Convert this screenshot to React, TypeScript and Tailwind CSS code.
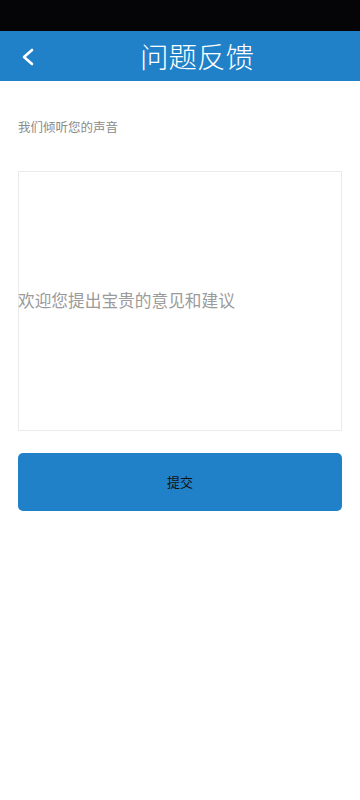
export default function App() {
  return (
    <div
      className="flex min-h-[800px] w-[360px] flex-col bg-white"
      style={{ fontFamily: '"Noto Sans CJK SC", "Noto Sans", sans-serif' }}
    >
      <div className="h-[31px] bg-[#050508]" />
      <header className="relative flex h-[50px] items-center justify-center bg-[#2181c8]">
        <svg
          className="absolute left-[20px] top-[17px]"
          width="16"
          height="18"
          viewBox="0 0 16 18"
          fill="none"
          stroke="white"
          strokeWidth="2.6"
          strokeLinecap="round"
          strokeLinejoin="round"
        >
          <path d="M12 2 L4 9 L12 16" />
        </svg>
        <h1 className="ml-[34px] text-[28.5px] font-light leading-none text-white">问题反馈</h1>
      </header>
      <div className="flex flex-col px-[18px]">
        <p className="mt-[37px] text-[12.5px] leading-[18px] text-[#8a8a8a]">我们倾听您的声音</p>
        <div className="mt-[35px] flex h-[260px] items-center border border-[#ebebeb]">
          <span className="-ml-px text-[16.7px] text-[#9b9b9b]">欢迎您提出宝贵的意见和建议</span>
        </div>
        <button className="mt-[22px] flex h-[58px] items-center justify-center rounded-[5px] bg-[#2181c8] text-[13px] text-[#111]">
          提交
        </button>
      </div>
    </div>
  );
}
